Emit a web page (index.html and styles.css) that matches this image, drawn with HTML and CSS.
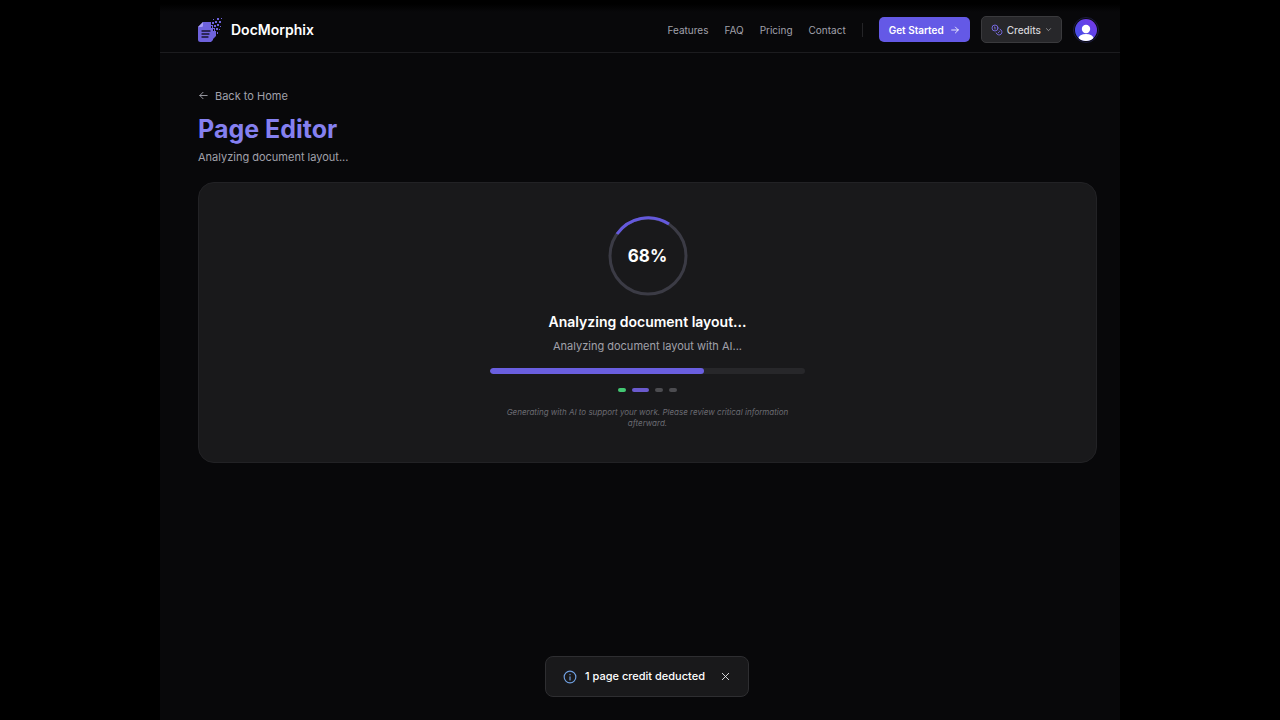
FILE: index.html
```html
<!DOCTYPE html>
<html lang="en">
<head>
    <meta charset="UTF-8">
    <meta name="viewport" content="width=device-width, initial-scale=1.0">
    <title>DocMorphix - Page Editor</title>
    <link rel="stylesheet" href="styles.css">
</head>
<body>
    <div class="app">
        <header class="navbar">
            <a href="/" class="logo">
                <svg class="logo-icon" viewBox="0 0 26 26" aria-hidden="true">
                    <path fill="#6e62dc" d="M6 5h8v3h2v3h2v3h1v5l-3 3v1l-2 2H3.500A2.500 2.500 0 0 1 1 22.500V10z"/>
                    <path fill="#a79df5" d="M6 5v3.500A1.500 1.500 0 0 1 4.500 10H1z"/>
                    <path stroke="#17152f" stroke-width="1.300" stroke-linecap="round" d="M5 14h8M5 17h7M5 20h6"/>
                    <path fill="#6e62dc" d="M15 5h2v2h-2zM17 8h2v2h-2zM19 11h2v2h-2zM18 4h2v2h-2zM20 7h2v2h-2zM22 4h2v2h-2zM20 1h2v2h-2zM16 2h1v1h-1zM24 1h1v1h-1zM23 9h1v1h-1zM20 15h1v2h-1zM22 12h1v1h-1z"/>
                    <path fill="#0a0a0c" d="M14 9h1v2h-1zM16 12h1v2h-1z"/>
                </svg>
                <span>DocMorphix</span>
            </a>
            <div class="nav-right">
                <nav class="nav-links">
                    <a href="#features">Features</a>
                    <a href="#faq">FAQ</a>
                    <a href="#pricing">Pricing</a>
                    <a href="#contact">Contact</a>
                </nav>
                <span class="divider"></span>
                <div class="nav-actions">
                    <button type="button" class="btn btn-primary">
                        Get Started
                        <svg class="icon-sm" viewBox="0 0 24 24"><path d="M4 12h16M13 5l7 7-7 7"/></svg>
                    </button>
                    <button type="button" class="btn btn-credits">
                        <svg class="icon-coins" viewBox="0 0 24 24"><circle cx="8" cy="8" r="6"/><path d="M18.090 10.370A6 6 0 1 1 10.340 18M7 6h1v4M16.710 13.880l.7.710-2.820 2.820"/></svg>
                        Credits
                        <svg class="icon-chevron" viewBox="0 0 24 24"><path d="M5 9l7 7 7-7"/></svg>
                    </button>
                    <button type="button" class="avatar" aria-label="Account">
                        <svg viewBox="0 0 24 24">
                            <defs>
                                <linearGradient id="avatarFill" x1="0" y1="1" x2="1" y2="0">
                                    <stop offset="0" stop-color="#3d55e8"/>
                                    <stop offset="1" stop-color="#7a35e8"/>
                                </linearGradient>
                                <clipPath id="avatarClip"><circle cx="12" cy="12" r="11"/></clipPath>
                            </defs>
                            <circle cx="12" cy="12" r="11" fill="url(#avatarFill)"/>
                            <g fill="#fff" clip-path="url(#avatarClip)">
                                <circle cx="12" cy="11" r="4.200"/>
                                <ellipse cx="12" cy="20.500" rx="7.600" ry="4.500"/>
                            </g>
                        </svg>
                    </button>
                </div>
            </div>
        </header>

        <main class="content">
            <a href="/" class="back-link">
                <svg class="icon-back" viewBox="0 0 24 24"><path d="M20 12H4M11 5l-7 7 7 7"/></svg>
                Back to Home
            </a>
            <h1>Page Editor</h1>
            <p class="subtitle">Analyzing document layout...</p>

            <section class="card">
                <div class="spinner">
                    <svg viewBox="0 0 80 80">
                        <circle class="spinner-track" cx="40" cy="40" r="38"/>
                        <path class="spinner-arc" d="M9 18A38 38 0 0 1 61 8"/>
                    </svg>
                    <span class="percent">68%</span>
                </div>
                <h2>Analyzing document layout...</h2>
                <p class="card-text">Analyzing document layout with AI...</p>
                <div class="progress" role="progressbar" aria-label="Progress" aria-valuenow="68" aria-valuemin="0" aria-valuemax="100">
                    <div class="progress-fill" style="width: 68%"></div>
                </div>
                <div class="steps">
                    <span class="step done"></span>
                    <span class="step active"></span>
                    <span class="step"></span>
                    <span class="step"></span>
                </div>
                <p class="note">Generating with AI to support your work. Please review critical information afterward.</p>
            </section>
        </main>

        <div class="toast-area">
            <div class="toast" role="status">
                <svg class="icon-info" viewBox="0 0 24 24"><circle cx="12" cy="12" r="10"/><path d="M12 17v-5.500M12 7.500v.5"/></svg>
                <span>1 page credit deducted</span>
                <button type="button" class="toast-close" aria-label="Close">
                    <svg viewBox="0 0 24 24"><path d="M5 5l14 14M19 5L5 19"/></svg>
                </button>
            </div>
        </div>
    </div>
</body>
</html>
```

FILE: styles.css
```css
* {
    box-sizing: border-box;
}
body {
    margin: 0;
    background-color: #000;
    color: #fff;
    font-family: Inter, "Liberation Sans", sans-serif;
}
h1, h2, p {
    margin: 0;
}
a {
    color: inherit;
    text-decoration: none;
}
button {
    font-family: inherit;
    cursor: pointer;
}
svg {
    display: block;
    flex-shrink: 0;
}
.app {
    max-width: 960px;
    min-height: 100vh;
    margin: 0 auto;
    background: linear-gradient(#000 4px, #08080a 12px);
}

/* navbar */
.navbar {
    display: flex;
    align-items: center;
    justify-content: space-between;
    padding: 16px 21px 9px 37px;
    border-bottom: 1px solid #1c1c1f;
}
.logo {
    display: flex;
    align-items: center;
    gap: 8px;
    font-size: 14px;
    font-weight: 600;
}
.logo-icon {
    width: 26px;
    height: 26px;
}
.nav-right, .nav-links, .nav-actions {
    display: flex;
    align-items: center;
}
.nav-right {
    gap: 16px;
}
.nav-links {
    gap: 16px;
    font-size: 10px;
    color: #a1a1aa;
}
.divider {
    width: 1px;
    height: 14px;
    background-color: #242427;
}
.nav-actions {
    gap: 11px;
}
.btn {
    display: flex;
    align-items: center;
    border-radius: 5px;
    font-size: 10px;
}
.btn svg, .icon-back, .icon-info, .toast-close svg {
    fill: none;
    stroke: currentColor;
    stroke-width: 2;
    stroke-linecap: round;
    stroke-linejoin: round;
}
.btn-primary {
    gap: 6px;
    height: 25px;
    padding: 0 10px;
    border: none;
    background-color: #6459e6;
    color: #fff;
    font-weight: 600;
}
.icon-sm {
    width: 10px;
    height: 10px;
}
.btn-credits {
    gap: 4px;
    height: 27px;
    padding: 0 9px;
    border: 1px solid #3a3a3d;
    background-color: #27272a;
    color: #d4d4d8;
    font-weight: 500;
}
.btn .icon-coins {
    width: 12px;
    height: 12px;
    stroke: #7568dc;
}
.icon-chevron {
    width: 7px;
    height: 7px;
}
.avatar {
    padding: 0;
    border: 1px solid #1c1c40;
    border-radius: 50%;
    background: none;
}
.avatar svg {
    width: 24px;
    height: 24px;
}

/* page */
.content {
    padding: 32px 23px 32px 38px;
}
.back-link {
    display: inline-flex;
    align-items: center;
    gap: 6px;
    font-size: 11px;
    line-height: 16px;
    color: #a1a1aa;
}
.icon-back {
    width: 11px;
    height: 11px;
}
h1 {
    margin-top: 8px;
    font-size: 25px;
    line-height: 32px;
    color: #8580f0;
}
.subtitle {
    margin-top: 4px;
    font-size: 11px;
    line-height: 16px;
    color: #a1a1aa;
}
.card {
    display: flex;
    flex-direction: column;
    align-items: center;
    margin-top: 17px;
    padding: 33px;
    border: 1px solid #222225;
    border-radius: 16px;
    background-color: #19191b;
    text-align: center;
}
.spinner {
    display: grid;
    place-items: center;
}
.spinner svg, .percent {
    grid-area: 1 / 1;
}
.spinner svg {
    width: 80px;
    height: 80px;
    fill: none;
    stroke-width: 3;
}
.spinner-track {
    stroke: #3b3b45;
}
.spinner-arc {
    stroke: #6459dc;
}
.percent {
    font-size: 17px;
    font-weight: 700;
}
h2 {
    margin-top: 16px;
    font-size: 14px;
    line-height: 20px;
    font-weight: 600;
}
.card-text {
    margin-top: 6px;
    font-size: 11px;
    line-height: 16px;
    color: #a1a1aa;
}
.progress {
    width: 100%;
    max-width: 315px;
    height: 6px;
    margin-top: 14px;
    border-radius: 3px;
    background-color: #27272a;
    overflow: hidden;
}
.progress-fill {
    height: 100%;
    border-radius: 3px;
    background-color: #6a5fe0;
}
.steps {
    display: flex;
    gap: 6px;
    margin-top: 14px;
}
.step {
    width: 8px;
    height: 4px;
    border-radius: 2px;
    background-color: #4c4c50;
}
.step.done {
    background-color: #43c873;
}
.step.active {
    width: 17px;
    background-color: #6a5acd;
}
.note {
    max-width: 315px;
    margin-top: 15px;
    font-size: 8px;
    line-height: 11px;
    font-style: italic;
    color: #6b6b72;
}

/* toast */
.toast-area {
    position: fixed;
    left: 14px;
    right: 0;
    bottom: 23px;
    display: flex;
    justify-content: center;
    pointer-events: none;
}
.toast {
    display: flex;
    align-items: center;
    gap: 8px;
    padding: 12px 17px;
    border: 1px solid #2e2e31;
    border-radius: 8px;
    background-color: #19191b;
    font-size: 11px;
    font-weight: 500;
    line-height: 15px;
    pointer-events: auto;
}
.icon-info {
    width: 14px;
    height: 14px;
    color: #6f9fe0;
}
.toast-close {
    margin-left: 7px;
    padding: 0;
    border: none;
    background: none;
    color: #e4e4e7;
}
.toast-close svg {
    width: 11px;
    height: 11px;
}
```
